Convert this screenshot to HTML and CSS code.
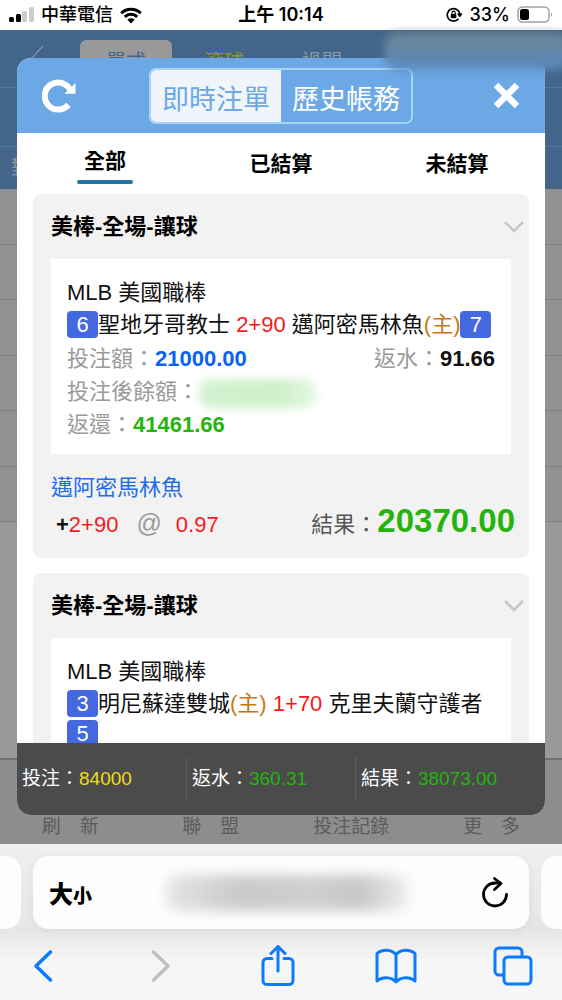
FILE: index.html
```
<!DOCTYPE html>
<html lang="zh-Hant">
<head>
  <meta charset="UTF-8" />
  <meta name="viewport" content="width=device-width, initial-scale=1.0"/>
  <title>即時注單</title>
  <link rel="stylesheet" href="styles.css">
</head>
<body>

<div class="status-bar">
  <div class="status-left">
    <svg width="25" height="16" viewBox="0 0 25 16" aria-hidden="true">
      <rect x="0" y="10" width="5" height="5" rx="1.5" fill="#000"/>
      <rect x="7" y="7" width="5" height="8" rx="1.5" fill="#000"/>
      <rect x="13" y="4" width="5" height="11" rx="1.5" fill="#ccc"/>
      <rect x="20" y="0" width="5" height="15" rx="1.5" fill="#ccc"/>
    </svg>
    <span>中華電信</span>
    <svg width="22" height="17" viewBox="0 0 22 17" aria-hidden="true">
      <path d="M1.2 6.2a14 14 0 0 1 19.6 0M4.8 9.8a9 9 0 0 1 12.4 0" fill="none" stroke="#000" stroke-width="3"/>
      <path d="M11 16.5l-3.6-3.7a5.2 5.2 0 0 1 7.2 0z" fill="#000"/>
    </svg>
  </div>
  <div class="status-time">上午 10:14</div>
  <div class="status-right">
    <svg width="17" height="16" viewBox="0 0 17 16" aria-hidden="true">
      <path d="M13.8 7A6.3 6.3 0 1 0 12.500 11.800" fill="none" stroke="#000" stroke-width="1.700"/>
      <path d="M10.800 6.500h6l-3 4z" fill="#000"/>
      <rect x="4.800" y="7" width="5.600" height="4.300" rx="1" fill="#000"/>
      <path d="M6 7V5.800a1.600 1.600 0 0 1 3.200 0V7" fill="none" stroke="#000" stroke-width="1.200"/>
    </svg>
    <span>33%</span>
    <svg width="36" height="18" viewBox="0 0 36 18" aria-hidden="true">
      <rect x="1" y="1" width="31" height="15" rx="4.500" fill="none" stroke="#a0a0a0" stroke-width="1.500"/>
      <rect x="3" y="3" width="9" height="11" rx="2.500" fill="#000"/>
      <path d="M34 6v5q2-2.500 0-5" fill="#a0a0a0"/>
    </svg>
  </div>
</div>

<main class="page">
  <!-- Dimmed page -->
  <div class="back">
    <div class="back-header">
      <div class="back-tabs">
        <svg width="16" height="28" viewBox="0 0 16 28" aria-hidden="true">
          <path d="M14 1L2 14l12 13" fill="none" stroke="#7b8ea3" stroke-width="1.500"/>
        </svg>
        <span class="back-tab on">單式</span>
        <span class="back-tab live">滾球</span>
        <span class="back-tab">過關</span>
      </div>
      <div class="back-line"></div>
      <div class="back-filter">對</div>
    </div>
    <div class="back-rows">
      <div></div><div></div><div></div><div></div><div></div><div></div>
    </div>
    <div class="back-empty"></div>
    <div class="back-menu">
      <span>刷　新</span>
      <span>聯　盟</span>
      <span>投注記錄</span>
      <span>更　多</span>
    </div>
  </div>

  <!-- Modal -->
  <section class="modal">
    <header class="modal-header">
      <button class="icon-btn" aria-label="重新整理">
        <svg width="34" height="34" viewBox="0 0 34 34">
          <path d="M26.500 25.700A13.500 13.500 0 1 1 28.500 11.500" fill="none" stroke="#fff" stroke-width="6"/>
          <path d="M33.500 4v10.800H22.500z" fill="#fff"/>
        </svg>
      </button>
      <div class="segment">
        <button class="on">即時注單</button>
        <button>歷史帳務</button>
      </div>
      <button class="icon-btn" aria-label="關閉">
        <svg width="27" height="27" viewBox="0 0 27 27">
          <path d="M3 3l21 21M24 3L3 24" stroke="#fff" stroke-width="6.500"/>
        </svg>
      </button>
    </header>

    <nav class="tabs">
      <button class="on">全部</button>
      <button>已結算</button>
      <button>未結算</button>
    </nav>

    <div class="bet-list">
      <article class="bet">
        <button class="bet-title">
          美棒-全場-讓球
          <svg width="20" height="12" viewBox="0 0 20 12" aria-hidden="true">
            <path d="M1 1l9 9 9-9" fill="none" stroke="#c6c6c6" stroke-width="2.500"/>
          </svg>
        </button>
        <div class="bet-detail">
          <div class="line">MLB 美國職棒</div>
          <div class="teams"><b class="score">6</b>聖地牙哥教士 <span class="red">2+90</span> 邁阿密馬林魚<span class="home">(主)</span><b class="score">7</b></div>
          <div class="line split">
            <span>投注額：<strong class="blue">21000.00</strong></span>
            <span>返水：<strong class="black">91.66</strong></span>
          </div>
          <div class="line label">投注後餘額：<span class="smudge"></span></div>
          <div class="line label">返還：<strong class="green">41461.66</strong></div>
        </div>
        <div class="pick">邁阿密馬林魚</div>
        <div class="result">
          <div class="odds"><b>+</b><span class="red">2+90</span><span class="at">@</span><span class="red">0.97</span></div>
          <div class="total">結果：<strong>20370.00</strong></div>
        </div>
      </article>

      <article class="bet">
        <button class="bet-title">
          美棒-全場-讓球
          <svg width="20" height="12" viewBox="0 0 20 12" aria-hidden="true">
            <path d="M1 1l9 9 9-9" fill="none" stroke="#c6c6c6" stroke-width="2.500"/>
          </svg>
        </button>
        <div class="bet-detail">
          <div class="line">MLB 美國職棒</div>
          <div class="teams"><b class="score">3</b>明尼蘇達雙城<span class="home">(主)</span> <span class="red">1+70</span> 克里夫蘭守護者 <b class="score">5</b></div>
        </div>
      </article>
    </div>

    <footer class="summary">
      <div>投注：<span class="yellow">84000</span></div>
      <div>返水：<span class="green">360.31</span></div>
      <div>結果：<span class="green">38073.00</span></div>
    </footer>
  </section>
  <div class="account-smudge"></div>
</main>

<div class="browser-bar">
  <div class="address-row">
    <div class="side left"></div>
    <div class="address">
      <button class="text-size" aria-label="大小">大<small>小</small></button>
      <span class="url-smudge"></span>
      <button class="icon-btn" aria-label="重新載入">
        <svg width="28" height="32" viewBox="0 0 28 32">
          <path d="M25.500 17.500A11.500 11.500 0 1 1 14 6h5" fill="none" stroke="#000" stroke-width="2.800" stroke-linecap="round"/>
          <path d="M13.500 1.500L20 6.500l-6.500 6" fill="none" stroke="#000" stroke-width="2.800" stroke-linecap="round" stroke-linejoin="round"/>
        </svg>
      </button>
    </div>
    <div class="side right"></div>
  </div>
  <nav class="toolbar">
    <button class="icon-btn" aria-label="上一頁">
      <svg width="20" height="42" viewBox="0 0 20 42">
        <path d="M17.500 7L3 21l14.500 14" fill="none" stroke="#0a7aff" stroke-width="3.500" stroke-linecap="round" stroke-linejoin="round"/>
      </svg>
    </button>
    <button class="icon-btn" aria-label="下一頁" disabled>
      <svg width="20" height="42" viewBox="0 0 20 42">
        <path d="M2.500 7L17 21 2.500 35" fill="none" stroke="#bfbfbf" stroke-width="3.500" stroke-linecap="round" stroke-linejoin="round"/>
      </svg>
    </button>
    <button class="icon-btn" aria-label="分享">
      <svg width="34" height="42" viewBox="0 0 34 42">
        <path d="M11 13.500H6a4 4 0 0 0-4 4V35.500a4 4 0 0 0 4 4H28a4 4 0 0 0 4-4V17.500a4 4 0 0 0-4-4H23M17 26V2M10 8.500L17 1.500l7 7" fill="none" stroke="#0a7aff" stroke-width="3" stroke-linecap="round" stroke-linejoin="round"/>
      </svg>
    </button>
    <button class="icon-btn" aria-label="書籤">
      <svg width="42" height="42" viewBox="0 0 42 42">
        <path d="M21 9.500C16 4 7 4 2 8.500V36c5-4.500 14-4.500 19 1C26 31.500 35 31.500 40 36V8.500C35 4 26 4 21 9.500zM21 9.500V37" fill="none" stroke="#0a7aff" stroke-width="3" stroke-linejoin="round"/>
      </svg>
    </button>
    <button class="icon-btn" aria-label="分頁">
      <svg width="40" height="42" viewBox="0 0 40 42">
        <path d="M11 30H6a4 4 0 0 1-4-4V7a4 4 0 0 1 4-4H25a4 4 0 0 1 4 4v5" fill="none" stroke="#0a7aff" stroke-width="3"/>
        <rect x="11" y="12" width="27" height="27" rx="4" fill="none" stroke="#0a7aff" stroke-width="3"/>
      </svg>
    </button>
  </nav>
</div>

</body>
</html>
```
FILE: styles.css
```
* {
  box-sizing: border-box;
}

body {
  margin: 0;
  height: 100vh;
  display: flex;
  flex-direction: column;
  overflow: hidden;
  background-color: #fff;
  color: #111;
  font-family: "Liberation Sans", "Noto Sans CJK TC", sans-serif;
  font-size: 22px;
}

button {
  padding: 0;
  border: none;
  background: none;
  color: inherit;
  font: inherit;
  cursor: pointer;
}

svg {
  display: block;
}

.icon-btn {
  flex: none;
}

/* Status bar */
.status-bar {
  flex: none;
  height: 30px;
  padding: 0 9px;
  display: grid;
  grid-template-columns: 1fr auto 1fr;
  align-items: center;
  color: #000;
  font-family: Inter, "Noto Sans CJK TC", sans-serif;
  font-size: 18px;
  font-weight: 500;
  line-height: 30px;
}

.status-left,
.status-right {
  display: flex;
  align-items: center;
  gap: 7px;
}

.status-right {
  justify-content: flex-end;
}

.status-time {
  font-weight: 600;
}

/* Dimmed page */
.page {
  position: relative;
  flex: 1;
  min-height: 0;
}

.back {
  height: 100%;
  display: flex;
  flex-direction: column;
  background-color: #999;
}

.back-header {
  flex: none;
  background-color: #436589;
}

.back-tabs {
  height: 57px;
  padding: 0 29px;
  display: flex;
  align-items: center;
  color: #8b98a6;
  font-size: 20px;
}

.back-tab {
  margin-left: 6px;
  width: 92px;
  height: 38px;
  line-height: 44px;
  text-align: center;
}

.back-tab.on {
  margin-left: 35px;
  border-radius: 6px;
  background-color: #999;
  color: #436589;
}

.back-tab.live {
  color: #8f9a1c;
}

.back-line {
  height: 60px;
  border-top: 1px solid #55779b;
  border-bottom: 1px solid #55779b;
}

.back-filter {
  height: 42px;
  padding-left: 11px;
  color: #8b98a6;
  font-size: 20px;
  line-height: 42px;
}

.back-rows {
  flex: none;
  height: 333px;
  display: grid;
  background-color: #929292;
}

.back-rows div {
  border-bottom: 1px solid #7f7f7f;
}

.back-empty {
  flex: 1;
}

.back-menu {
  flex: none;
  height: 86px;
  padding-bottom: 4px;
  display: grid;
  grid-template-columns: repeat(4, 1fr);
  align-items: end;
  border-top: 2px solid #707070;
  background-color: #8d8d8d;
  color: #5c5c5c;
  font-size: 19px;
  line-height: 26px;
  text-align: center;
}

/* Modal */
.modal {
  position: absolute;
  top: 28px;
  right: 17px;
  bottom: 29px;
  left: 17px;
  display: flex;
  flex-direction: column;
  overflow: hidden;
  border-radius: 14px;
  background-color: #fff;
}

.modal-header {
  flex: none;
  height: 75px;
  padding: 0 25px;
  display: grid;
  grid-template-columns: 1fr auto 1fr;
  align-items: center;
  background-color: #6ca8e5;
}

.modal-header .icon-btn:first-child {
  justify-self: start;
}

.modal-header .icon-btn:last-child {
  justify-self: end;
}

.segment {
  height: 56px;
  display: flex;
  overflow: hidden;
  border: 2px solid #a6d3f8;
  border-radius: 7px;
}

.segment button {
  width: 130px;
  padding-top: 3px;
  color: #fff;
  font-size: 27px;
}

.segment .on {
  background-color: #f0f5fc;
  color: #6ca8e5;
}

.tabs {
  flex: none;
  height: 61px;
  display: grid;
  grid-template-columns: repeat(3, 1fr);
  align-items: center;
  justify-items: center;
}

.tabs button {
  color: #000;
  font-size: 21px;
  font-weight: bold;
  line-height: 34px;
}

.tabs .on::after {
  content: "";
  display: block;
  width: 56px;
  height: 4px;
  margin-top: 2px;
  border-radius: 2px;
  background-color: #2474a4;
}

.bet-list {
  flex: 1;
  min-height: 0;
  padding: 0 16px;
  overflow: hidden;
}

.bet {
  margin-bottom: 15px;
  padding-bottom: 16px;
  border-radius: 8px;
  background-color: #f2f2f2;
}

.bet-title {
  width: 100%;
  height: 65px;
  padding: 0 5px 5px 18px;
  display: flex;
  align-items: center;
  justify-content: space-between;
  color: #000;
  font-weight: bold;
}

.bet-title svg {
  margin-top: 5px;
}

.bet-detail {
  margin: 0 18px;
  padding: 17px 16px 13px;
  background-color: #fff;
}

.line {
  line-height: 33px;
}

.label,
.split {
  color: #999;
}

.split {
  display: flex;
  justify-content: space-between;
}

.teams {
  padding: 1px 0 2px;
  line-height: 30px;
}

.score {
  display: inline-block;
  width: 31px;
  height: 27px;
  border-radius: 4px;
  background-color: #4368df;
  color: #fff;
  font-weight: normal;
  line-height: 27px;
  text-align: center;
}

.red {
  color: #f51a20;
}

.home {
  color: #c87810;
}

.blue {
  color: #0a62f5;
}

.black {
  color: #111;
}

.green {
  color: #25b40c;
}

.yellow {
  color: #f0dc14;
}

.smudge {
  display: inline-block;
  width: 118px;
  height: 29px;
  border-radius: 12px;
  background: linear-gradient(90deg, #d3f1d0, #cdf0c9 70%, #e6f8e4);
  filter: blur(5px);
  vertical-align: middle;
}

.pick {
  padding: 17px 18px 0;
  color: #1f6ce8;
  line-height: 33px;
}

.result {
  padding: 0 14px 0 23px;
  display: flex;
  align-items: baseline;
  justify-content: space-between;
  line-height: 34px;
}

.at {
  margin: 0 14px 0 18px;
  color: #999;
  font-size: 25px;
}

.total {
  color: #555;
}

.total strong {
  color: #25b40c;
  font-size: 33px;
}

.summary {
  flex: none;
  height: 72px;
  display: grid;
  grid-template-columns: 32% 32% 36%;
  align-items: center;
  background-color: #4b4b4b;
  color: #fff;
  font-size: 19px;
}

.summary div {
  padding-left: 5px;
  line-height: 44px;
}

.summary div + div {
  border-left: 1px solid #5e5e5e;
}

.account-smudge {
  position: absolute;
  top: 3px;
  right: -8px;
  width: 186px;
  height: 37px;
  border-radius: 14px;
  background: linear-gradient(#6f8796, #5f86ac 60%, #5b8dc2);
  filter: blur(4px);
}

/* Browser bar */
.browser-bar {
  position: relative;
  flex: none;
  height: 156px;
  padding-top: 12px;
  overflow: hidden;
  background: linear-gradient(#efefef, #e6e6e6 55%, #f6f6f6 75%);
}

.address-row {
  height: 73px;
  display: flex;
  gap: 12px;
}

.side {
  flex: none;
  width: 21px;
  background-color: #fdfdfd;
}

.side.left {
  border-radius: 0 15px 15px 0;
}

.side.right {
  border-radius: 15px 0 0 15px;
}

.address {
  flex: 1;
  padding: 0 20px 0 16px;
  display: flex;
  align-items: center;
  justify-content: space-between;
  border-radius: 15px;
  background-color: #fdfdfd;
  box-shadow: 0 2px 8px rgba(0, 0, 0, 0.06);
}

.text-size {
  color: #000;
  font-size: 24px;
  font-weight: 900;
}

.text-size small {
  font-size: 19px;
}

.url-smudge {
  width: 242px;
  height: 36px;
  border-radius: 12px;
  background: linear-gradient(90deg, #e6e6e6, #cacaca 30%, #cfcfcf 60%, #c8c8c8 80%, #ededed);
  filter: blur(6px);
}

.toolbar {
  padding: 16px 28px 0 22px;
  display: flex;
  align-items: center;
  justify-content: space-between;
}

.toolbar .icon-btn {
  width: 42px;
  display: flex;
  justify-content: center;
}
```
